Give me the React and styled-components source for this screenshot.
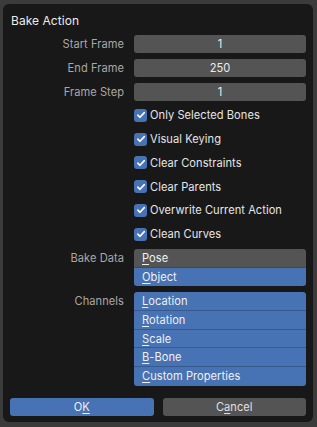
import styled, { createGlobalStyle } from "styled-components";

const GlobalStyle = createGlobalStyle`
    html, body {
        margin: 0;
        padding: 0;
        background: #3b3b3b;
        font-family: Inter, "Noto Sans", sans-serif;
    }
`;

const BLUE = "#4772b3";

const frameFields = [
    { label: "Start Frame", value: "1" },
    { label: "End Frame", value: "250" },
    { label: "Frame Step", value: "1" },
];

const options = [
    "Only Selected Bones",
    "Visual Keying",
    "Clear Constraints",
    "Clear Parents",
    "Overwrite Current Action",
    "Clean Curves",
];

const bakeData = [
    { key: "P", rest: "ose", active: false },
    { key: "O", rest: "bject", active: true },
];

const channels = [
    { key: "L", rest: "ocation" },
    { key: "R", rest: "otation" },
    { key: "S", rest: "cale" },
    { key: "B", rest: "-Bone" },
    { key: "C", rest: "ustom Properties" },
];

export default function App() {
    return (
        <>
            <GlobalStyle />
            <Screen>
                <Panel>
                    <Title>Bake Action</Title>
                    <Form>
                        {frameFields.map((f) => (
                            <Row key={f.label}>
                                <Label>{f.label}</Label>
                                <NumberField>{f.value}</NumberField>
                            </Row>
                        ))}
                        {options.map((o) => (
                            <Row key={o}>
                                <span />
                                <CheckRow>
                                    <CheckBox>
                                        <svg width="10" height="10" viewBox="0 0 10 10">
                                            <path d="M1.8 5.2 L4 7.3 L8.3 2.6" fill="none" stroke="#fff" strokeWidth="1.6" strokeLinecap="round" strokeLinejoin="round" />
                                        </svg>
                                    </CheckBox>
                                    {o}
                                </CheckRow>
                            </Row>
                        ))}
                        <EnumRow>
                            <Label>Bake Data</Label>
                            <EnumList>
                                {bakeData.map((b) => (
                                    <EnumItem key={b.rest} active={b.active}>
                                        <u>{b.key}</u>{b.rest}
                                    </EnumItem>
                                ))}
                            </EnumList>
                        </EnumRow>
                        <EnumRow>
                            <Label>Channels</Label>
                            <EnumList>
                                {channels.map((c) => (
                                    <EnumItem key={c.rest} active>
                                        <u>{c.key}</u>{c.rest}
                                    </EnumItem>
                                ))}
                            </EnumList>
                        </EnumRow>
                    </Form>
                    <Buttons>
                        <Button primary>O<u>K</u></Button>
                        <Button>C<u>a</u>ncel</Button>
                    </Buttons>
                </Panel>
            </Screen>
        </>
    );
}

const Screen = styled.div`
    width: 317px;
    height: 427px;
    padding: 4px 4px 0 3px;
    box-sizing: border-box;
`;

const Panel = styled.div`
    width: 310px;
    height: 418px;
    box-sizing: border-box;
    background: #181818;
    border-radius: 6px;
    padding: 0 7px 0 7px;
    display: flex;
    flex-direction: column;
    color: #e6e6e6;
    font-size: 11.1px;
    letter-spacing: 0.05px;
`;

const Title = styled.div`
    height: 31px;
    line-height: 33px;
    padding-left: 1px;
    font-size: 12px;
    color: #ececec;
`;

const Form = styled.div`
    display: flex;
    flex-direction: column;
    gap: 5.75px;
`;

const Row = styled.div`
    display: grid;
    grid-template-columns: 114px 172px;
    column-gap: 10px;
    height: 18px;
    align-items: center;
`;

const EnumRow = styled.div`
    display: grid;
    grid-template-columns: 114px 172px;
    column-gap: 10px;
    align-items: start;
`;

const Label = styled.div`
    text-align: right;
    color: #a8a8a8;
    line-height: 18px;
`;

const NumberField = styled.div`
    height: 18px;
    line-height: 18px;
    background: #545454;
    border-radius: 3px;
    text-align: center;
    color: #ececec;
`;

const CheckRow = styled.div`
    display: flex;
    align-items: center;
    gap: 3px;
    color: #e6e6e6;
`;

const CheckBox = styled.div`
    width: 13px;
    height: 13px;
    border-radius: 3px;
    background: ${BLUE};
    display: flex;
    align-items: center;
    justify-content: center;
`;

const EnumList = styled.div`
    display: flex;
    flex-direction: column;
    border-radius: 3px;
    overflow: hidden;
`;

const EnumItem = styled.div`
    height: 18.8px;
    line-height: 19px;
    padding-left: 8px;
    background: ${({ active }) => (active ? BLUE : "#545454")};
    color: #f0f0f0;
    box-shadow: inset 0 -1px 0 ${({ active }) => (active ? "#37598c" : "#474747")};
    &:last-child {
        box-shadow: none;
    }
    u {
        text-underline-offset: 2px;
        text-decoration-thickness: 1px;
    }
`;

const Buttons = styled.div`
    display: flex;
    gap: 9px;
    margin-top: 12px;
`;

const Button = styled.div`
    flex: 1;
    height: 18px;
    line-height: 18px;
    border-radius: 3px;
    text-align: center;
    background: ${({ primary }) => (primary ? BLUE : "#545454")};
    color: ${({ primary }) => (primary ? "#f0f0f0" : "#e0e0e0")};
    u {
        text-underline-offset: 2px;
        text-decoration-thickness: 1px;
    }
`;
